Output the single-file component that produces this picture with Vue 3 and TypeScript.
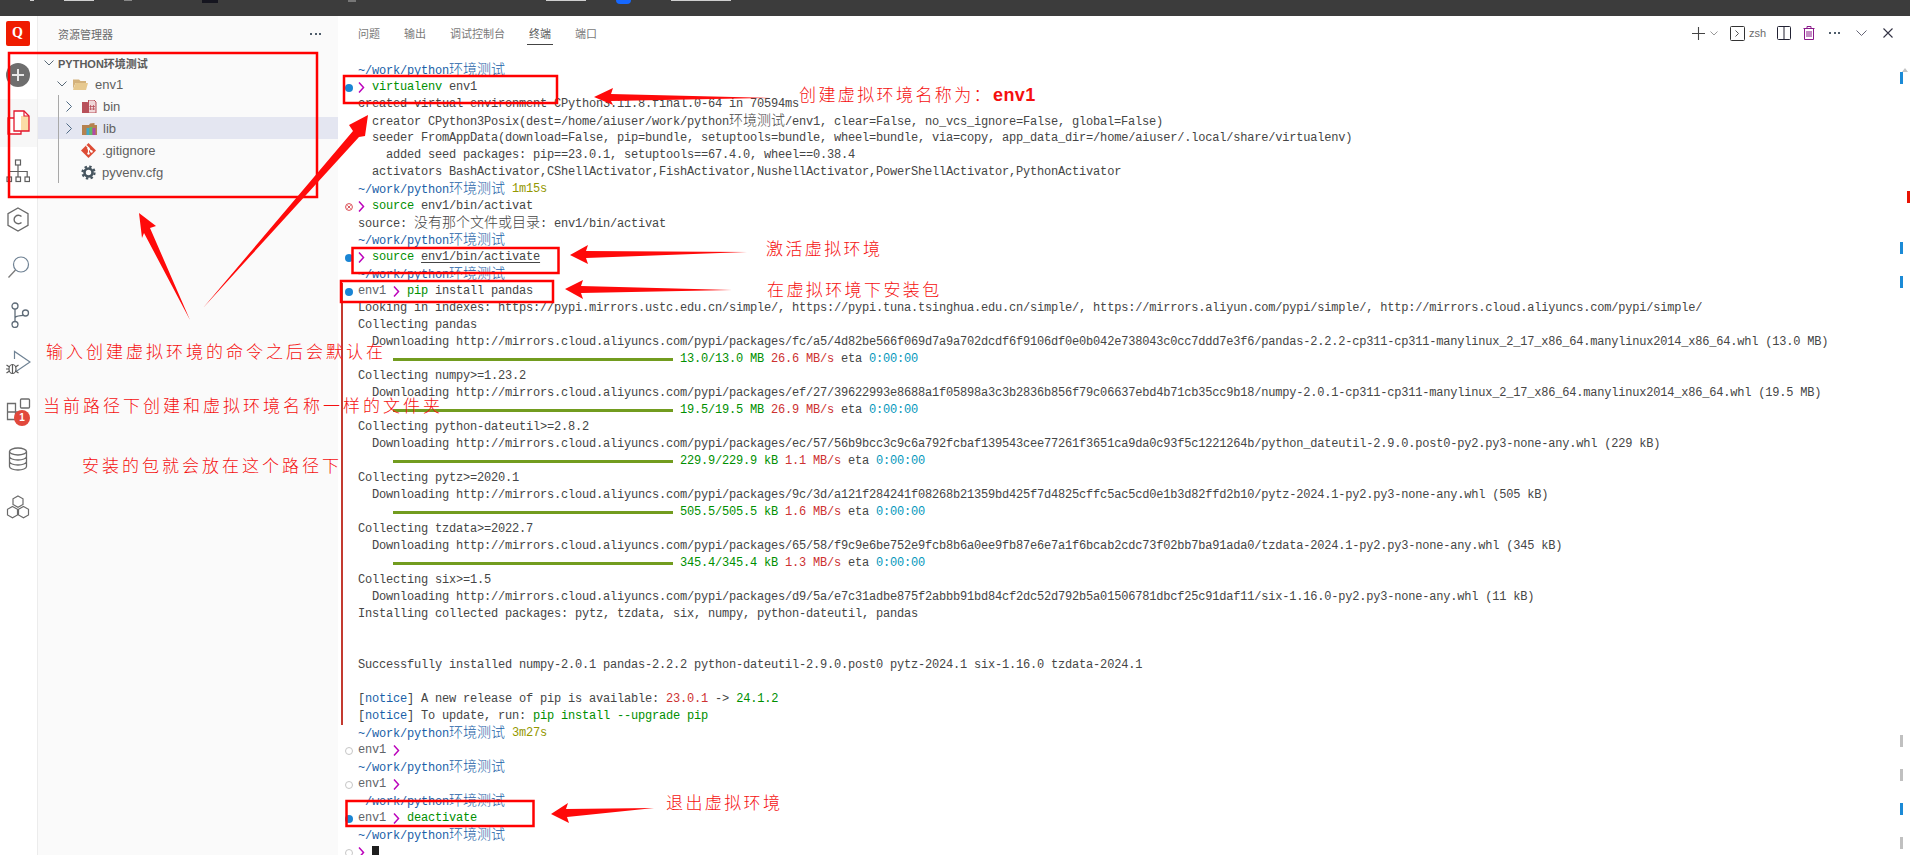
<script setup lang="ts">
type Kind = 'path' | 'dur' | 'cmd' | 'txt' | 'dim' | 'green' | 'red' | 'cyan' | 'blue' | 'chev' | 'bar' | 'under' | 'cursor'
interface Span { t: string; c: Kind }
interface Row { g?: 'on' | 'off' | 'err'; fail?: boolean; s: Span[] }

const PATH: Span = { t: '~/work/python环境测试', c: 'path' }
const CHEV: Span = { t: '', c: 'chev' }
const txt = (t: string): Span => ({ t, c: 'txt' })
const BASE = 'http://mirrors.cloud.aliyuncs.com/pypi/packages/'
const dl = (p: string): Row => ({ fail: true, s: [txt('  Downloading ' + BASE + p)] })
const col = (t: string): Row => ({ fail: true, s: [txt(t)] })
const bar = (size: string, rate: string): Row => ({
  fail: true,
  s: [
    txt('     '),
    { t: '', c: 'bar' },
    txt(' '),
    { t: size, c: 'green' },
    txt(' '),
    { t: rate, c: 'red' },
    txt(' eta '),
    { t: '0:00:00', c: 'cyan' }
  ]
})
const ENV: Span = { t: 'env1 ', c: 'dim' }
const notice: Span[] = [txt('['), { t: 'notice', c: 'blue' }, txt('] ')]

const rawRows: Row[] = [
  { s: [PATH] },
  { g: 'on', s: [CHEV, txt(' '), { t: 'virtualenv', c: 'cmd' }, txt(' env1')] },
  { s: [txt('created virtual environment CPython3.11.8.final.0-64 in 70594ms')] },
  { s: [txt('  creator CPython3Posix(dest=/home/aiuser/work/python环境测试/env1, clear=False, no_vcs_ignore=False, global=False)')] },
  { s: [txt('  seeder FromAppData(download=False, pip=bundle, setuptools=bundle, wheel=bundle, via=copy, app_data_dir=/home/aiuser/.local/share/virtualenv)')] },
  { s: [txt('    added seed packages: pip==23.0.1, setuptools==67.4.0, wheel==0.38.4')] },
  { s: [txt('  activators BashActivator,CShellActivator,FishActivator,NushellActivator,PowerShellActivator,PythonActivator')] },
  { s: [PATH, txt(' '), { t: '1m15s', c: 'dur' }] },
  { g: 'err', s: [CHEV, txt(' '), { t: 'source', c: 'cmd' }, txt(' env1/bin/activat')] },
  { s: [txt('source: 没有那个文件或目录: env1/bin/activat')] },
  { s: [PATH] },
  { g: 'on', s: [CHEV, txt(' '), { t: 'source', c: 'cmd' }, txt(' '), { t: 'env1/bin/activate', c: 'under' }] },
  { s: [PATH] },
  { g: 'on', fail: true, s: [ENV, CHEV, txt(' '), { t: 'pip', c: 'cmd' }, txt(' install pandas')] },
  col('Looking in indexes: https://pypi.mirrors.ustc.edu.cn/simple/, https://pypi.tuna.tsinghua.edu.cn/simple/, https://mirrors.aliyun.com/pypi/simple/, http://mirrors.cloud.aliyuncs.com/pypi/simple/'),
  col('Collecting pandas'),
  dl('fc/a5/4d82be566f069d7a9a702dcdf6f9106df0e0b042e738043c0cc7ddd7e3f6/pandas-2.2.2-cp311-cp311-manylinux_2_17_x86_64.manylinux2014_x86_64.whl (13.0 MB)'),
  bar('13.0/13.0 MB', '26.6 MB/s'),
  col('Collecting numpy>=1.23.2'),
  dl('ef/27/39622993e8688a1f05898a3c3b2836b856f79c06637ebd4b71cb35cc9b18/numpy-2.0.1-cp311-cp311-manylinux_2_17_x86_64.manylinux2014_x86_64.whl (19.5 MB)'),
  bar('19.5/19.5 MB', '26.9 MB/s'),
  col('Collecting python-dateutil>=2.8.2'),
  dl('ec/57/56b9bcc3c9c6a792fcbaf139543cee77261f3651ca9da0c93f5c1221264b/python_dateutil-2.9.0.post0-py2.py3-none-any.whl (229 kB)'),
  bar('229.9/229.9 kB', '1.1 MB/s'),
  col('Collecting pytz>=2020.1'),
  dl('9c/3d/a121f284241f08268b21359bd425f7d4825cffc5ac5cd0e1b3d82ffd2b10/pytz-2024.1-py2.py3-none-any.whl (505 kB)'),
  bar('505.5/505.5 kB', '1.6 MB/s'),
  col('Collecting tzdata>=2022.7'),
  dl('65/58/f9c9e6be752e9fcb8b6a0ee9fb87e6e7a1f6bcab2cdc73f02bb7ba91ada0/tzdata-2024.1-py2.py3-none-any.whl (345 kB)'),
  bar('345.4/345.4 kB', '1.3 MB/s'),
  col('Collecting six>=1.5'),
  dl('d9/5a/e7c31adbe875f2abbb91bd84cf2dc52d792b5a01506781dbcf25c91daf11/six-1.16.0-py2.py3-none-any.whl (11 kB)'),
  col('Installing collected packages: pytz, tzdata, six, numpy, python-dateutil, pandas'),
  col(''),
  col(''),
  col('Successfully installed numpy-2.0.1 pandas-2.2.2 python-dateutil-2.9.0.post0 pytz-2024.1 six-1.16.0 tzdata-2024.1'),
  col(''),
  { fail: true, s: [...notice, txt('A new release of pip is available: '), { t: '23.0.1', c: 'red' }, txt(' -> '), { t: '24.1.2', c: 'green' }] },
  { fail: true, s: [...notice, txt('To update, run: '), { t: 'pip install --upgrade pip', c: 'green' }] },
  { s: [PATH, txt(' '), { t: '3m27s', c: 'dur' }] },
  { g: 'off', s: [ENV, CHEV] },
  { s: [PATH] },
  { g: 'off', s: [ENV, CHEV] },
  { s: [PATH] },
  { g: 'on', s: [ENV, CHEV, txt(' '), { t: 'deactivate', c: 'cmd' }] },
  { s: [PATH] },
  { g: 'off', s: [CHEV, txt(' '), { t: '', c: 'cursor' }] }
]

// CJK glyphs take two cells in the terminal grid, so they get their own run.
const pieces = (t: string) =>
  (t.match(/[\u4e00-\u9fff]+|[^\u4e00-\u9fff]+/g) ?? []).map((p) => ({
    t: p,
    cjk: /[\u4e00-\u9fff]/.test(p)
  }))

const rows = rawRows.map((r) => ({
  ...r,
  s: r.s.map((sp) => ({ ...sp, parts: pieces(sp.t) }))
}))

const tabs = [
  { label: '问题' },
  { label: '输出' },
  { label: '调试控制台' },
  { label: '终端', active: true },
  { label: '端口' }
]

const marks = [
  { cls: 'm-blue m1' },
  { cls: 'm-red m2' },
  { cls: 'm-blue m3' },
  { cls: 'm-blue m4' },
  { cls: 'm-gray m5' },
  { cls: 'm-gray m6' },
  { cls: 'm-blue m7' },
  { cls: 'm-gray m8' }
]
</script>

<template>
  <div class="page">
    <header class="topbar">
      <i class="frag f1"></i><i class="frag f2"></i><i class="frag f3"></i><i class="frag f4"></i>
      <i class="frag f5"></i><i class="frag f6"></i><i class="frag f7"></i><i class="frag f8"></i>
    </header>

    <div class="body">
      <nav class="activity">
        <div class="logo">Q</div>
        <div class="plus">
          <svg width="14" height="14" viewBox="0 0 14 14"><path d="M7 1v12M1 7h12" stroke="#e8e8e8" stroke-width="2" /></svg>
        </div>
        <div class="act act-active">
          <svg width="24" height="26" viewBox="0 0 24 26" fill="none">
            <path d="M8 8H2v16h13v-3" fill="#fff" stroke="#e3172d" stroke-width="1.3" />
            <path d="M8 1h10l5 5v15H8z" fill="#fff" />
            <path d="M15 6h8v15h-8z" fill="#fbdca6" />
            <path d="M8 1h10l5 5v15H8z" stroke="#e3172d" stroke-width="1.3" />
            <path d="M18 1v5h5" stroke="#e3172d" stroke-width="1.2" />
          </svg>
        </div>
        <div class="act">
          <svg width="24" height="24" viewBox="0 0 24 24" fill="none" stroke="#5f5f5f" stroke-width="1.2">
            <rect x="9.500" y="1" width="5" height="5" />
            <rect x="1" y="18" width="4.500" height="4.500" />
            <rect x="10" y="18" width="4.500" height="4.500" />
            <rect x="19" y="18" width="4.500" height="4.500" />
            <path d="M12 6v12M3.200 18v-5.500h18V18" />
          </svg>
        </div>
        <div class="act">
          <svg width="22" height="25" viewBox="0 0 22 25" fill="none" stroke="#6a6a6a" stroke-width="1.3">
            <path d="M11 1l10 5.700v11.600L11 24 1 18.300V6.700z" />
            <path d="M14.500 9.500a4.300 4.300 0 1 0 0 6" stroke-width="1.400" />
          </svg>
        </div>
        <div class="act">
          <svg width="24" height="24" viewBox="0 0 24 24" fill="none">
            <circle cx="15" cy="9.500" r="7.500" stroke="#6f8294" stroke-width="1.200" />
            <path d="M9.500 15L2.500 22.500" stroke="#7a7a7a" stroke-width="1.300" />
          </svg>
        </div>
        <div class="act">
          <svg width="24" height="26" viewBox="0 0 24 26" fill="none" stroke="#5f6c78" stroke-width="1.300">
            <circle cx="9" cy="4" r="3" />
            <circle cx="19.500" cy="11" r="3" />
            <circle cx="9" cy="22.500" r="3" />
            <path d="M9 7v12.500M9 16c0-3 8-2 9-3" />
          </svg>
        </div>
        <div class="act">
          <svg width="26" height="26" viewBox="0 0 26 26" fill="none" stroke="#6f8294" stroke-width="1.200">
            <path d="M9.500 9V1.500L25 12 11 21.500" />
            <ellipse cx="7.500" cy="19" rx="3.500" ry="4.500" stroke="#5a5a5a" />
            <path d="M7.500 14.500V23.500M1.500 15l3 2M1.500 23l3-2M13.500 15l-3 2M13.500 23l-3-2M1 19h3" stroke="#5a5a5a" />
          </svg>
        </div>
        <div class="act act-ext">
          <svg width="26" height="26" viewBox="0 0 26 26" fill="none" stroke="#6c6c6c" stroke-width="1.300">
            <rect x="15.500" y="1" width="9" height="9" rx="1" />
            <path d="M2.500 5.500h8v16h-8zM2.500 14h16v7.500h-8" />
          </svg>
          <span class="badge">1</span>
        </div>
        <div class="act">
          <svg width="20" height="24" viewBox="0 0 20 24" fill="none" stroke="#6a6a6a" stroke-width="1.300">
            <ellipse cx="10" cy="4.500" rx="8.500" ry="3.500" />
            <path d="M1.500 4.500v15c0 2 4 3.500 8.500 3.500s8.500-1.500 8.500-3.500v-15M1.500 9.500c0 2 4 3.500 8.500 3.500s8.500-1.500 8.500-3.500M1.500 14.500c0 2 4 3.500 8.500 3.500s8.500-1.500 8.500-3.500" />
          </svg>
        </div>
        <div class="act">
          <svg width="24" height="24" viewBox="0 0 24 24" fill="none" stroke="#6a6a6a" stroke-width="1.200">
            <path d="M12 1l5 2.800v5.600L12 12.200 7 9.400V3.800z" />
            <path d="M6.500 11.500l5 2.800v5.600l-5 2.800-5-2.800v-5.600z" />
            <path d="M17.500 11.500l5 2.800v5.600l-5 2.800-5-2.800v-5.600z" />
          </svg>
        </div>
      </nav>

      <aside class="sidebar">
        <div class="side-head">
          <span>资源管理器</span>
          <span class="side-more"><i></i><i></i><i></i></span>
        </div>
        <div class="tree">
          <div class="t-row t-root">
            <svg class="tw" width="10" height="6" viewBox="0 0 10 6" fill="none"><path d="M.5.5L5 5 9.500.5" stroke="#5a6a78" /></svg>
            <span>PYTHON环境测试</span>
          </div>
          <div class="t-row t-env">
            <svg class="tw" width="10" height="6" viewBox="0 0 10 6" fill="none"><path d="M.5.5L5 5 9.500.5" stroke="#5a6a78" /></svg>
            <svg class="ic-folder" width="15" height="12" viewBox="0 0 15 12">
              <path d="M0 1.500h6l1.500 1.500H13v2H2.500L0 11z" fill="#d4b27c" />
              <path d="M2.500 5H15l-2 7H0z" fill="#e7c98f" />
            </svg>
            <span>env1</span>
          </div>
          <div class="t-children">
            <div class="t-row">
              <svg class="tc" width="6" height="11" viewBox="0 0 6 11" fill="none"><path d="M.5.5l5 5-5 5" stroke="#4f6a84" /></svg>
              <svg class="ic" width="15" height="13" viewBox="0 0 15 13">
                <path d="M0 2h5.500L7 3.500V13H0z" fill="#b8505a" />
                <path d="M6.500 0H12l2 2v11H6.500z" fill="#f0d6d8" stroke="#b8505a" />
                <path d="M8.500 5v5M11.500 5v5M7.500 6.500h5.500M7.500 9h5.500" stroke="#b8505a" stroke-width=".8" />
              </svg>
              <span>bin</span>
            </div>
            <div class="t-row t-sel">
              <svg class="tc" width="6" height="11" viewBox="0 0 6 11" fill="none"><path d="M.5.5l5 5-5 5" stroke="#4f6a84" /></svg>
              <svg class="ic" width="15" height="13" viewBox="0 0 15 13">
                <path d="M0 3h7l1-1.500 4.500-.5v2H15v10H0z" fill="#b5814f" />
                <rect x="4.500" y="6" width="3" height="7" fill="#3fa9c9" />
                <rect x="7.500" y="5" width="3" height="8" fill="#61b96a" />
                <rect x="10.500" y="6" width="3" height="7" fill="#b04aa8" />
              </svg>
              <span>lib</span>
            </div>
            <div class="t-row t-leaf">
              <svg class="ic" width="15" height="15" viewBox="0 0 15 15">
                <path d="M7.500 0L15 7.500 7.500 15 0 7.500z" fill="#dd4c35" />
                <path d="M5.200 2.500L7.500 4.800v6M7.500 5.500l3 3" stroke="#fff" stroke-width="1.100" fill="none" />
                <circle cx="7.500" cy="5.500" r="1.200" fill="#fff" /><circle cx="7.500" cy="10.500" r="1.200" fill="#fff" /><circle cx="10.500" cy="8.500" r="1.200" fill="#fff" />
              </svg>
              <span>.gitignore</span>
            </div>
            <div class="t-row t-leaf">
              <svg class="ic" width="15" height="15" viewBox="0 0 15 15" fill="none">
                <circle cx="7.500" cy="7.500" r="4" stroke="#46555f" stroke-width="2.600" />
                <circle cx="7.500" cy="7.500" r="6" stroke="#46555f" stroke-width="2.200" stroke-dasharray="2.400 2.310" />
              </svg>
              <span>pyvenv.cfg</span>
            </div>
          </div>
        </div>
      </aside>

      <main class="term">
        <div class="term-head">
          <div class="tabs">
            <span v-for="tab in tabs" :key="tab.label" class="tab" :class="{ 'tab-active': tab.active }">{{ tab.label }}</span>
          </div>
          <div class="tools">
            <svg width="15" height="15" viewBox="0 0 15 15"><path d="M7.500 1v13M1 7.500h13" stroke="#444" stroke-width="1.100" /></svg>
            <svg class="tool-chev" width="8" height="5" viewBox="0 0 8 5" fill="none"><path d="M.5.500L4 4 7.500.500" stroke="#999" /></svg>
            <svg class="tool-term" width="15" height="15" viewBox="0 0 15 15" fill="none"><rect x=".5" y=".5" width="14" height="14" rx="1" stroke="#333" /><path d="M5.500 4.500l3 3-3 3" stroke="#555" /></svg>
            <span class="zsh">zsh</span>
            <svg class="tool-split" width="14" height="14" viewBox="0 0 14 14" fill="none"><rect x=".5" y=".5" width="13" height="13" rx="1" stroke="#223" /><path d="M7 .5v13" stroke="#223" /></svg>
            <svg class="tool-trash" width="12" height="14" viewBox="0 0 12 14" fill="none" stroke="#8a1a8a"><path d="M.5 2.500h11M4 2.500V.5h4v2M1.500 2.500v11h9v-11M4 5v6M6 5v6M8 5v6" /></svg>
            <span class="tool-more"><i></i><i></i><i></i></span>
            <svg class="tool-down" width="11" height="6" viewBox="0 0 11 6" fill="none"><path d="M.5.500l5 5 5-5" stroke="#667" /></svg>
            <svg class="tool-x" width="10" height="10" viewBox="0 0 10 10" fill="none"><path d="M.5.500l9 9M9.500.500l-9 9" stroke="#334" stroke-width="1.100" /></svg>
          </div>
        </div>

        <div class="lines">
          <div v-for="(r, i) in rows" :key="i" class="line">
            <span class="gutter" :class="{ 'gutter-fail': r.fail }">
              <i v-if="r.g === 'on'" class="dot dot-on"></i>
              <i v-else-if="r.g === 'off'" class="dot dot-off"></i>
              <svg v-else-if="r.g === 'err'" width="8" height="8" viewBox="0 0 8 8" fill="none">
                <circle cx="4" cy="4" r="3.400" stroke="#d9484f" />
                <path d="M2.300 2.300l3.400 3.400M5.700 2.300L2.300 5.700" stroke="#d9484f" stroke-width=".9" />
              </svg>
            </span>
            <span class="code">
              <template v-for="(sp, j) in r.s" :key="j">
                <span v-if="sp.c === 'chev'" class="chev">
                  <svg width="7" height="13" viewBox="0 0 7 13" fill="none"><path d="M1 1.500l4.500 5-4.500 5" stroke="#bc05bc" stroke-width="1.500" /></svg>
                </span>
                <i v-else-if="sp.c === 'bar'" class="bar"></i>
                <i v-else-if="sp.c === 'cursor'" class="cursor"></i>
                <span v-else :class="sp.c"><span v-for="(p, k) in sp.parts" :key="k" :class="{ cjk: p.cjk }">{{ p.t }}</span></span>
              </template>
            </span>
          </div>
        </div>

        <div class="ruler">
          <i class="ruler-up"></i>
          <i v-for="m in marks" :key="m.cls" class="mark" :class="m.cls"></i>
        </div>
      </main>
    </div>

    <svg class="notes" width="1910" height="855" viewBox="0 0 1910 855">
      <g class="boxes">
        <rect x="9" y="53" width="308" height="144" />
        <rect x="344" y="76" width="213" height="27" />
        <rect x="352.500" y="248" width="206" height="25" />
        <rect x="341" y="281" width="212" height="21" />
        <rect x="346.500" y="801" width="187" height="25" />
      </g>
      <g class="arrows">
        <polygon points="594,97 613,88 611,94 770,98 611,101 613,105" />
        <polygon points="368,115 349,125 353,131 203,308 359,137 365,136" />
        <polygon points="139,213 156,226 150,228 190,320 144,233 142,238" />
        <polygon points="570,255 588,245 586,251 747,252 586,258 588,264" />
        <polygon points="565,289 583,280 581,286 732,290 581,293 583,299" />
        <polygon points="551,814 568,803 566,809 654,808 567,817 569,823" />
      </g>
      <g class="labels">
        <text x="46" y="358">输入创建虚拟环境的命令之后会默认在</text>
        <text x="43" y="412">当前路径下创建和虚拟环境名称一样的文件夹</text>
        <text x="82" y="472">安装的包就会放在这个路径下</text>
        <text x="799" y="101" class="tight">创建虚拟环境名称为：<tspan class="latin">env1</tspan></text>
        <text x="766" y="255" class="tight">激活虚拟环境</text>
        <text x="767" y="296" class="tight">在虚拟环境下安装包</text>
        <text x="666" y="809" class="tight">退出虚拟环境</text>
      </g>
    </svg>
  </div>
</template>

<style scoped>
.page {
  position: relative;
  width: 1910px;
  height: 855px;
  overflow: hidden;
  display: flex;
  flex-direction: column;
  background: #fff;
  font-family: "Liberation Sans", "Noto Sans CJK SC", sans-serif;
}
.topbar {
  position: relative;
  flex: 0 0 16px;
  background: #3c3c3c;
  display: flex;
  gap: 0;
}
.frag { display: block; height: 1px; background: #cfcfcf; margin-top: 0; }
.f1 { width: 4px; margin-left: 30px; }
.f2 { width: 30px; margin-left: 30px; }
.f3 { width: 8px; margin-left: 30px; background: #888; }
.f4 { width: 16px; margin-left: 70px; height: 3px; background: #15151f; }
.f5 { width: 8px; margin-left: 130px; height: 2px; background: #777; }
.f6 { width: 40px; margin-left: 190px; }
.f7 { width: 15px; margin-left: 30px; height: 4px; background: #1668ff; border-radius: 0 0 4px 4px; }
.f8 { width: 60px; margin-left: 40px; }
.body { flex: 1; display: flex; min-height: 0; }

/* activity bar */
.activity {
  flex: 0 0 38px;
  border-right: 1px solid #ececec;
  box-sizing: border-box;
  display: flex;
  flex-direction: column;
  align-items: center;
  background: #fff;
}
.logo {
  width: 24px;
  height: 25px;
  margin-top: 5px;
  margin-right: 2px;
  background: #ef1c00;
  border-radius: 2px;
  color: #fff;
  font: bold 14px/24px "Liberation Serif", serif;
  text-align: center;
}
.plus {
  width: 24px;
  height: 24px;
  margin-top: 17px;
  margin-right: 2px;
  border-radius: 50%;
  background: #6e6e6e;
  display: flex;
  align-items: center;
  justify-content: center;
}
.act {
  position: relative;
  width: 100%;
  height: 48px;
  display: flex;
  align-items: center;
  justify-content: center;
  padding-right: 2px;
  box-sizing: border-box;
}
.act-active { background: #f7f7f7; margin-top: 12px; }
.badge {
  position: absolute;
  left: 14px;
  top: 23px;
  width: 16px;
  height: 16px;
  border-radius: 50%;
  background: #e1483c;
  color: #fff;
  font-size: 10px;
  font-weight: 700;
  line-height: 16px;
  text-align: center;
}

/* explorer */
.sidebar {
  flex: 0 0 300px;
  background: #fafafa;
  color: #5f5f5f;
}
.side-head {
  height: 36px;
  padding: 0 17px 0 20px;
  display: flex;
  align-items: center;
  justify-content: space-between;
  font-size: 11px;
  color: #6b6b6b;
}
.side-more, .tool-more { display: flex; gap: 2.500px; }
.side-more i, .tool-more i { width: 2px; height: 2px; background: #4f5d6b; display: block; }
.tree { font-size: 13px; }
.t-row {
  height: 22px;
  display: flex;
  align-items: center;
  padding-left: 66px;
  box-sizing: border-box;
}
.t-root {
  height: 21px;
  padding-left: 6px;
  font-size: 11px;
  font-weight: 700;
  color: #5a5a5a;
}
.t-root .tw { margin-right: 4px; }
.t-env { padding-left: 19px; }
.t-env .tw { margin-right: 6px; }
.ic-folder { margin-right: 7px; }
.t-children { position: relative; }
.t-children::before {
  content: "";
  position: absolute;
  left: 20px;
  top: 0;
  bottom: 0;
  width: 1px;
  background: #a8a8a8;
}
.t-children .t-row { padding-left: 28px; }
.t-children .tc { margin-right: 10px; }
.t-children .t-leaf { padding-left: 43px; }
.t-children .ic { margin-right: 6px; flex: none; }
.t-sel { background: #e4e6f1; }

/* terminal */
.term {
  position: relative;
  flex: 1;
  min-width: 0;
  background: #fff;
  padding-left: 2px;
}
.term-head {
  height: 46px;
  display: flex;
  justify-content: space-between;
  padding: 0 17px 0 18px;
  box-sizing: border-box;
}
.tabs { display: flex; gap: 24px; padding-top: 11px; }
.tab {
  font-size: 11px;
  line-height: 14px;
  height: 17px;
  color: #7a7a7a;
}
.tab-active {
  color: #5c5c5c;
  border-bottom: 1px solid #444;
  padding: 0 2px;
  margin: 0 -2px;
}
.tools { display: flex; align-items: center; height: 34px; }
.tool-chev { margin-left: 4px; }
.tool-term { margin-left: 12px; }
.zsh { margin-left: 4px; font-size: 11px; color: #6b6b6b; }
.tool-split { margin-left: 11px; }
.tool-trash { margin-left: 12px; }
.tool-more { margin-left: 14px; }
.tool-down { margin-left: 16px; }
.tool-x { margin-left: 16px; }

.lines {
  font-family: "Liberation Mono", "Noto Sans CJK SC", monospace;
  font-size: 12px;
  letter-spacing: -0.2px;
  color: #454545;
}
.line {
  height: 17px;
  line-height: 17px;
  display: flex;
  white-space: pre;
}
.gutter {
  flex: 0 0 18px;
  display: flex;
  align-items: center;
  justify-content: center;
}
.gutter-fail {
  flex-basis: 17px;
  box-sizing: border-box;
  margin-left: 1px;
  border-left: 2px solid #c33a30;
  padding-right: 3px;
}
.dot { display: block; width: 8px; height: 8px; border-radius: 50%; box-sizing: border-box; }
.dot-on { background: #1a85d4; }
.dot-off { border: 1px solid #c6c6c6; }
.code { display: flex; align-items: center; }
.chev { display: inline-flex; width: 7px; height: 13px; }
.cjk { font-size: 14px; font-weight: 300; letter-spacing: 0; }
.path { color: #1a5fa8; }
.dur { color: #949800; }
.cmd { color: #008f00; }
.dim { color: #5f6468; }
.green { color: #008f00; }
.red { color: #cd3131; }
.cyan { color: #0598bc; }
.blue { color: #1a5fa8; }
.under { text-decoration: underline; text-underline-offset: 2px; }
.bar { display: block; width: 280px; height: 3px; background: #729c1f; }
.cursor { display: block; width: 7px; height: 14px; background: #1e1e1e; }

.ruler { position: absolute; inset: 0; pointer-events: none; }
.ruler-up {
  position: absolute;
  left: 1564px;
  top: 49px;
  border: 3px solid transparent;
  border-bottom: 4px solid #c4c4c4;
}
.mark { position: absolute; display: block; width: 3px; height: 12px; }
.m-blue { background: #1b8ad6; }
.m-red { background: #e81404; }
.m-gray { background: #c0c0c0; }
.m1 { left: 1562px; top: 56px; }
.m2 { left: 1569px; top: 175px; }
.m3 { left: 1562px; top: 226px; }
.m4 { left: 1562px; top: 260px; }
.m5 { left: 1562px; top: 719px; }
.m6 { left: 1562px; top: 753px; }
.m7 { left: 1562px; top: 787px; }
.m8 { left: 1562px; top: 821px; }

/* annotations drawn over the screenshot */
.notes { position: absolute; left: 0; top: 0; pointer-events: none; }
.boxes rect { fill: none; stroke: #ff0000; stroke-width: 2.500px; }
.arrows polygon { fill: #ff0a0a; }
.labels text {
  fill: #f51010;
  font-family: "Noto Sans CJK SC", sans-serif;
  font-weight: 300;
  font-size: 17px;
  letter-spacing: 3px;
}
.labels text.tight { letter-spacing: 2.400px; }
.labels .latin {
  font-family: "Liberation Sans", sans-serif;
  font-weight: 700;
  font-size: 18px;
  letter-spacing: .4px;
}
</style>

<style>
html, body { margin: 0; background: #fff; }
</style>
